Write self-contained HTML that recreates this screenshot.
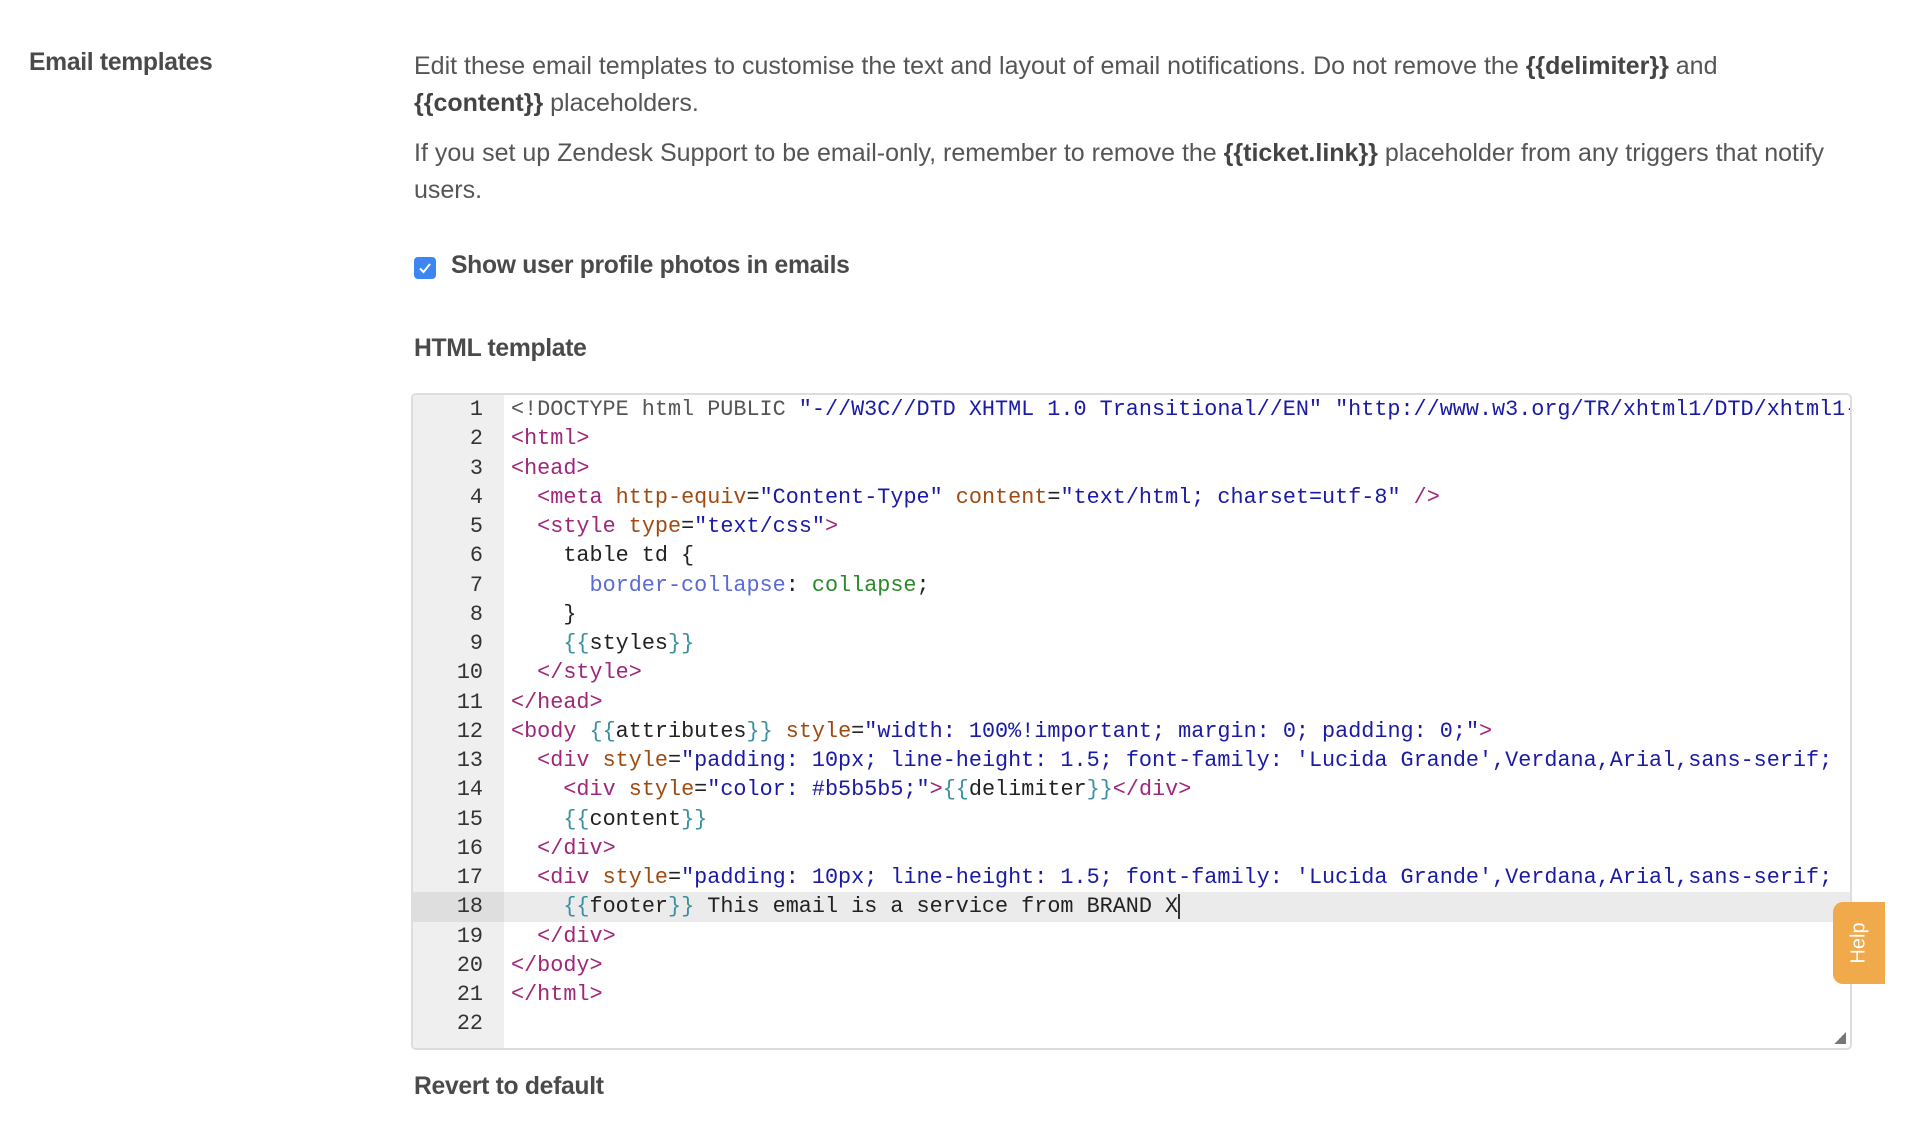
<!DOCTYPE html>
<html><head><meta charset="utf-8">
<style>
*{margin:0;padding:0;box-sizing:border-box}
body{width:1914px;height:1146px;background:#fff;font-family:"Liberation Sans",Arial,sans-serif;color:#555;position:relative;overflow:hidden}
.lbl{position:absolute;left:29px;top:49px;font-size:24.7px;font-weight:bold;color:#4a4a4a;letter-spacing:-0.3px}
.p{position:absolute;left:414px;width:1450px;font-size:25px;line-height:37px;color:#555;letter-spacing:0}
.p b{color:#444}
.cb{position:absolute;left:414px;top:257px;width:22px;height:22px;background:#3d85f0;border-radius:4px}
.cbl{position:absolute;left:451px;top:252px;font-size:24.7px;font-weight:bold;color:#4a4a4a;letter-spacing:-0.3px}
.h{position:absolute;left:414px;top:335px;font-size:24.7px;font-weight:bold;color:#4a4a4a;letter-spacing:-0.3px}
.ed{position:absolute;left:411px;top:393px;width:1441px;height:657px;border:2px solid #ddd;border-radius:5px;overflow:hidden;background:#fff}
.gut{position:absolute;left:0;top:0;width:91px;height:100%;background:#efefef}
.hl{position:absolute;left:0;top:497px;width:100%;height:30px;background:#ebebeb}
.hlg{position:absolute;left:0;top:497px;width:91px;height:30px;background:#dedede}
.nums{position:absolute;left:0;top:0;width:70px;text-align:right;font-family:"Liberation Mono",monospace;font-size:21.8px;line-height:29.25px;color:#333;white-space:pre}
.code{position:absolute;left:98px;top:0;font-family:"Liberation Mono",monospace;font-size:21.8px;line-height:29.25px;white-space:pre;color:#222}
.t{color:#a0267a}.a{color:#a04a10}.s{color:#1a1aa6}.d{color:#555}.pr{color:#5a6ad6}.v{color:#2a8a2a}.m{color:#3a8fa0}
.cur{border-right:2px solid #333}
.rv{position:absolute;left:414px;top:1073px;font-size:24.7px;font-weight:bold;color:#4a4a4a;letter-spacing:-0.3px}
.help{position:absolute;left:1833px;top:902px;width:52px;height:82px;background:#f0a94b;border-radius:10px 0 0 10px}
.help span{position:absolute;left:50%;top:50%;transform:translate(-50%,-50%) rotate(-90deg);color:#fff;font-size:20px}
.grip{position:absolute;right:4px;bottom:4px;width:12px;height:12px;background:linear-gradient(135deg,transparent 50%,#777 50%)}
</style></head><body>
<div class="lbl">Email templates</div>
<div class="p" style="top:48px">Edit these email templates to customise the text and layout of email notifications. Do not remove the <b>{{delimiter}}</b> and<br><b>{{content}}</b> placeholders.</div>
<div class="p" style="top:135px">If you set up Zendesk Support to be email-only, remember to remove the <b>{{ticket.link}}</b> placeholder from any triggers that notify<br>users.</div>
<div class="cb"><svg width="22" height="22" viewBox="0 0 22 22"><path d="M6 11.5l3.5 3.5L16 7" stroke="#fff" stroke-width="2" fill="none"/></svg></div>
<div class="cbl">Show user profile photos in emails</div>
<div class="h">HTML template</div>
<div class="ed">
<div class="gut"></div>
<div class="hl"></div><div class="hlg"></div>
<div class="nums">1
2
3
4
5
6
7
8
9
10
11
12
13
14
15
16
17
18
19
20
21
22</div>
<div class="code"><span class="d">&lt;!DOCTYPE html PUBLIC </span><span class="s">"-//W3C//DTD XHTML 1.0 Transitional//EN" "http://www.w3.org/TR/xhtml1/DTD/xhtml1-transitional.dtd"&gt;</span>
<span class="t">&lt;html&gt;</span>
<span class="t">&lt;head&gt;</span>
  <span class="t">&lt;meta</span> <span class="a">http-equiv</span>=<span class="s">"Content-Type"</span> <span class="a">content</span>=<span class="s">"text/html; charset=utf-8"</span> <span class="t">/&gt;</span>
  <span class="t">&lt;style</span> <span class="a">type</span>=<span class="s">"text/css"</span><span class="t">&gt;</span>
    table td {
      <span class="pr">border-collapse</span>: <span class="v">collapse</span>;
    }
    <span class="m">{{</span>styles<span class="m">}}</span>
  <span class="t">&lt;/style&gt;</span>
<span class="t">&lt;/head&gt;</span>
<span class="t">&lt;body</span> <span class="m">{{</span>attributes<span class="m">}}</span> <span class="a">style</span>=<span class="s">"width: 100%!important; margin: 0; padding: 0;"</span><span class="t">&gt;</span>
  <span class="t">&lt;div</span> <span class="a">style</span>=<span class="s">"padding: 10px; line-height: 1.5; font-family: 'Lucida Grande',Verdana,Arial,sans-serif;</span>
    <span class="t">&lt;div</span> <span class="a">style</span>=<span class="s">"color: #b5b5b5;"</span><span class="t">&gt;</span><span class="m">{{</span>delimiter<span class="m">}}</span><span class="t">&lt;/div&gt;</span>
    <span class="m">{{</span>content<span class="m">}}</span>
  <span class="t">&lt;/div&gt;</span>
  <span class="t">&lt;div</span> <span class="a">style</span>=<span class="s">"padding: 10px; line-height: 1.5; font-family: 'Lucida Grande',Verdana,Arial,sans-serif;</span>
    <span class="m">{{</span>footer<span class="m">}}</span> This email is a service from BRAND X<span class="cur"></span>
  <span class="t">&lt;/div&gt;</span>
<span class="t">&lt;/body&gt;</span>
<span class="t">&lt;/html&gt;</span>
</div>
<div class="grip"></div>
</div>
<div class="rv">Revert to default</div>
<div class="help"><span>Help</span></div>
</body></html>
